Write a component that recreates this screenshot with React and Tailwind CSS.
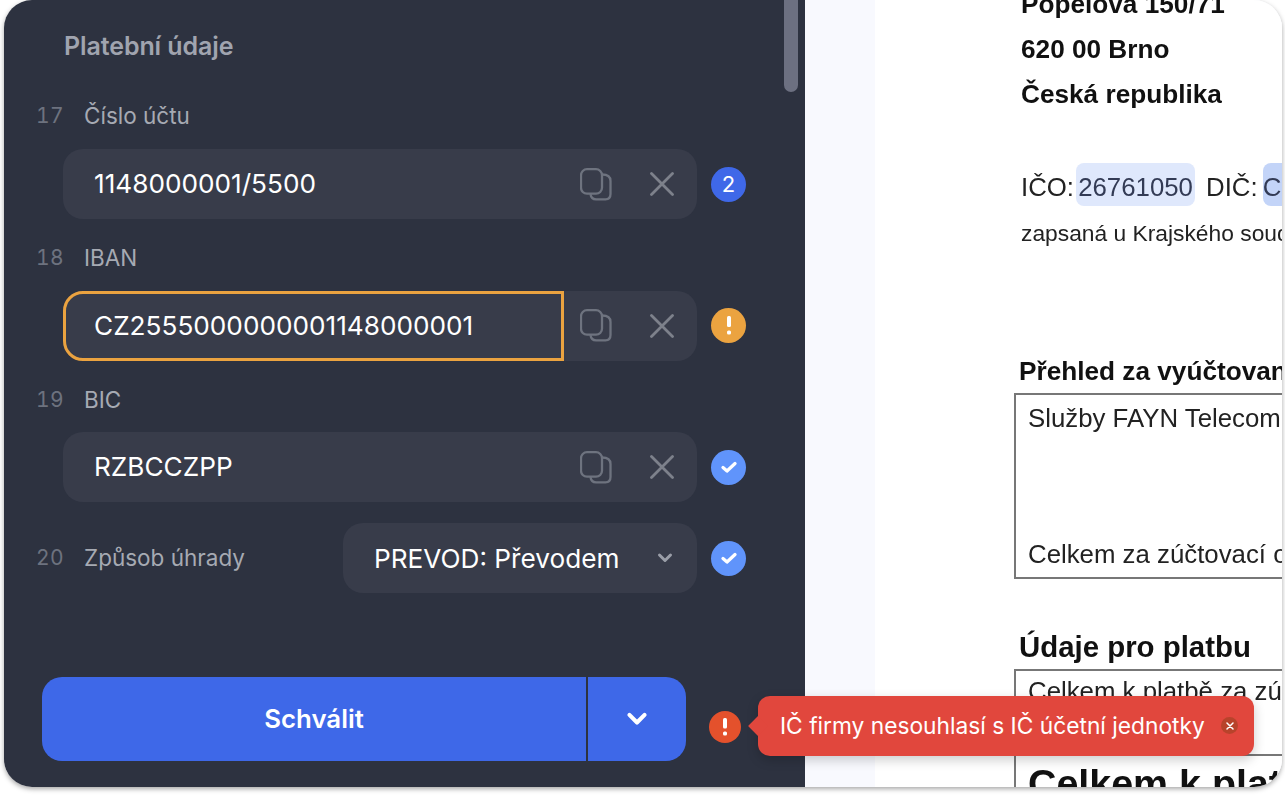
import React from "react";

const inter = "font-['Inter',sans-serif]";

function CopyIcon() {
  return (
    <svg width="33" height="33" viewBox="0 0 33 33" fill="none" stroke="#6e737f" strokeWidth="2.300">
      <rect x="1" y="1.200" width="21" height="24.500" rx="6" />
      <path d="M22 6.500C27 6.500 30.500 8 30.500 13V26C30.500 29.500 29 31.300 25.500 31.300H16C13 31.300 11 30 10.500 26" />
    </svg>
  );
}

function CloseIcon() {
  return (
    <svg width="24" height="24" viewBox="0 0 24 24" fill="none" stroke="#7d818b" strokeWidth="2.800" strokeLinecap="round">
      <path d="M1.500 1.500L22.500 22.500M22.500 1.500L1.500 22.500" />
    </svg>
  );
}

function Chevron({ color, size = 16 }) {
  return (
    <svg width={size} height={size} viewBox="0 0 16 16" fill="none" stroke={color} strokeWidth="3" strokeLinecap="round" strokeLinejoin="round">
      <path d="M2.500 5L8 10.500L13.500 5" />
    </svg>
  );
}

function CountBadge() {
  return (
    <div className="w-[35px] h-[35px] rounded-full bg-[#3f68e8] flex items-center justify-center text-white text-[22px] leading-none shrink-0">2</div>
  );
}

function WarnBadge() {
  return (
    <div className="w-[35px] h-[35px] rounded-full bg-[#eba340] flex items-center justify-center shrink-0">
      <svg width="6" height="19" viewBox="0 0 6 19" fill="white">
        <rect x="1" y="0" width="4" height="11" rx="1.500" />
        <rect x="1" y="14.500" width="4" height="4" rx="1.500" />
      </svg>
    </div>
  );
}

function CheckBadge() {
  return (
    <div className="w-[35px] h-[35px] rounded-full bg-[#6094fb] flex items-center justify-center shrink-0">
      <svg width="16" height="12" viewBox="0 0 16 12" fill="none" stroke="white" strokeWidth="3.200" strokeLinecap="round" strokeLinejoin="round">
        <path d="M2 6.500L6 10L14 2.500" />
      </svg>
    </div>
  );
}

function LabelRow({ n, label, low }) {
  return (
    <div className={low ? "h-[66px] flex items-center pl-[32px] pt-[2px]" : "h-[66px] flex items-center pl-[32px]"}>
      <span className="w-[48px] text-[21px] text-[#6d727f] tracking-[0.5px] tabular-nums">{n}</span>
      <span className="text-[22.500px] text-[#a6aab3]">{label}</span>
    </div>
  );
}

function Field({ n, label, value, badge, focused, low }) {
  return (
    <div>
      <LabelRow n={n} label={label} low={low} />
      <div className="flex items-center pl-[59px] gap-[14px]">
        <div className="relative w-[634px] h-[70px] rounded-[20px] bg-[#383c4a] flex items-center">
          <div className={focused ? "w-[501px] h-[70px] rounded-l-[20px] border-[3px] border-[#eba340] flex items-center pl-[28px] pt-[1px]" : "w-[501px] h-[70px] flex items-center pl-[31px]"}>
            <span className="text-[26.200px] text-white">{value}</span>
          </div>
          <div className="ml-[16px] flex items-center">
            <CopyIcon />
          </div>
          <div className="ml-[37px] flex items-center">
            <CloseIcon />
          </div>
        </div>
        {badge}
      </div>
    </div>
  );
}

function DocLine({ className, children }) {
  return <div className={`whitespace-nowrap ${className}`}>{children}</div>;
}

export default function App() {
  return (
    <div className={`w-[1285px] h-[795px] bg-white overflow-hidden ${inter}`}>
      <div className="relative ml-[4px] w-[1278px] h-[787px] rounded-[28px] overflow-hidden flex shadow-[0_2px_5px_rgba(0,0,0,0.35)]">
        {/* left panel */}
        <div className="relative w-[801px] h-full bg-[#2d3240] flex flex-col shrink-0">
          <div className="absolute right-[7px] top-0 w-[14px] h-[92px] rounded-b-[7px] bg-[#6c7081]" />
          <div className="h-[83px] pl-[60px] pt-[29px] text-[25px] leading-[34px] font-semibold tracking-[-0.1px] text-[#a0a4af]">Platební údaje</div>
          <div className="flex flex-col gap-[5.500px]">
            <Field n="17" label="Číslo účtu" value="1148000001/5500" badge={<CountBadge />} />
            <Field n="18" label="IBAN" value="CZ2555000000001148000001" badge={<WarnBadge />} focused />
            <Field n="19" label="BIC" value="RZBCCZPP" badge={<CheckBadge />} low />
          </div>
          <div className="mt-[21px] flex items-center pl-[32px] h-[70px]">
            <span className="w-[48px] text-[21px] text-[#6d727f] tracking-[0.5px] tabular-nums">20</span>
            <span className="text-[22.500px] text-[#a6aab3]">Způsob úhrady</span>
            <div className="ml-auto w-[354px] h-[70px] rounded-[20px] bg-[#383c4a] flex items-center justify-between pl-[31px] pr-[24px]">
              <span className="text-[26.200px] text-white whitespace-nowrap pt-[1px]">PREVOD: Převodem</span>
              <Chevron color="#9a9ea8" />
            </div>
            <div className="ml-[14px] mr-[59px]">
              <CheckBadge />
            </div>
          </div>
          <div className="mt-auto mb-[26px] pl-[38px] flex items-center">
            <div className="w-[644px] h-[84px] rounded-[20px] overflow-hidden flex bg-[#3e68e8] text-white">
              <div className="w-[544px] flex items-center justify-center text-[25.800px] font-semibold">Schválit</div>
              <div className="w-[2px] bg-[#2d3240]" />
              <div className="flex-1 flex items-center justify-center">
                <Chevron color="white" size={22} />
              </div>
            </div>
            <div className="ml-[23px] mt-[16px] w-[32px] h-[32px] rounded-full bg-[#e4512c] flex items-center justify-center">
              <svg width="6" height="18" viewBox="0 0 6 18" fill="white">
                <rect x="1" y="0" width="4" height="10.500" rx="1.500" />
                <rect x="1" y="13.500" width="4" height="4" rx="1.500" />
              </svg>
            </div>
          </div>
        </div>

        {/* right side */}
        <div className="flex-1 bg-[#f8f9fe] pl-[70px]">
          <div className="h-full bg-white overflow-hidden pl-[146px] text-[#111] font-['Liberation_Sans',Arial,sans-serif] blur-[0.4px]">
            <DocLine className="-mt-[18px] h-[45px] leading-[45px] text-[26.200px] font-bold">Popelova 150/71</DocLine>
            <DocLine className="h-[45px] leading-[45px] text-[26.200px] font-bold">620 00 Brno</DocLine>
            <DocLine className="h-[45px] leading-[45px] text-[26.200px] font-bold">Česká republika</DocLine>
            <DocLine className="mt-[46px] h-[43px] flex items-center text-[25.800px] text-[#222]">
              <span className="pt-[5px]">IČO:</span>
              <span className="ml-[2px] pt-[5px] h-[43px] w-[119px] rounded-[8px] bg-[#dfe8fc] flex items-center justify-center text-[#333b55]">26761050</span>
              <span className="ml-[11px] pt-[5px]">DIČ:</span>
              <span className="ml-[5px] pt-[5px] h-[43px] w-[40px] rounded-[8px] bg-[#c3d4f8] text-[#333b55] flex items-center">CZ26761050</span>
            </DocLine>
            <DocLine className="mt-[7px] h-[40px] leading-[40px] text-[22.800px] text-[#222]">zapsaná u Krajského soudu v Brně</DocLine>
            <DocLine className="-ml-[2px] mt-[101px] h-[34px] leading-[34px] text-[26.200px] font-bold">Přehled za vyúčtované období</DocLine>
            <div className="-ml-[7px] mt-[5px] h-[186px] w-[400px] border-2 border-[#777] pl-[12px] flex flex-col justify-between text-[25.800px] text-[#222]">
              <div className="whitespace-nowrap h-[46px] leading-[46px]">Služby FAYN Telecom</div>
              <div className="whitespace-nowrap h-[46px] leading-[46px]">Celkem za zúčtovací období</div>
            </div>
            <DocLine className="-ml-[2px] mt-[49px] h-[38px] leading-[38px] text-[29.400px] font-bold">Údaje pro platbu</DocLine>
            <div className="-ml-[7px] mt-[3px] h-[87px] w-[400px] border-2 border-[#777] pl-[12px] text-[25.800px] text-[#222]">
              <div className="whitespace-nowrap h-[41px] leading-[41px]">Celkem k platbě za zúčtovací</div>
            </div>
            <div className="-ml-[7px] h-[60px] w-[400px] border-x-2 border-[#777] pl-[12px] text-[39.400px] font-bold whitespace-nowrap leading-[54px]">Celkem k platbě</div>
          </div>
        </div>

        {/* tooltip */}
        <div className="absolute left-[754px] top-[696px] w-[496px] h-[60px] rounded-[12px] bg-[#e1473d] flex items-center pl-[22px] shadow-[0_4px_12px_rgba(0,0,0,0.2)]">
          <div className="absolute -left-[7px] top-[23px] w-[14px] h-[14px] rotate-45 bg-[#e1473d]" />
          <span className="relative text-[22.750px] text-white whitespace-nowrap">IČ firmy nesouhlasí s IČ účetní jednotky</span>
          <div className="absolute left-[463px] top-[21px] w-[17px] h-[17px] rounded-full bg-[#b8432b] flex items-center justify-center">
            <svg width="8" height="8" viewBox="0 0 8 8" stroke="white" strokeWidth="1.500" strokeLinecap="round">
              <path d="M1 1L7 7M7 1L1 7" />
            </svg>
          </div>
        </div>
      </div>
    </div>
  );
}
